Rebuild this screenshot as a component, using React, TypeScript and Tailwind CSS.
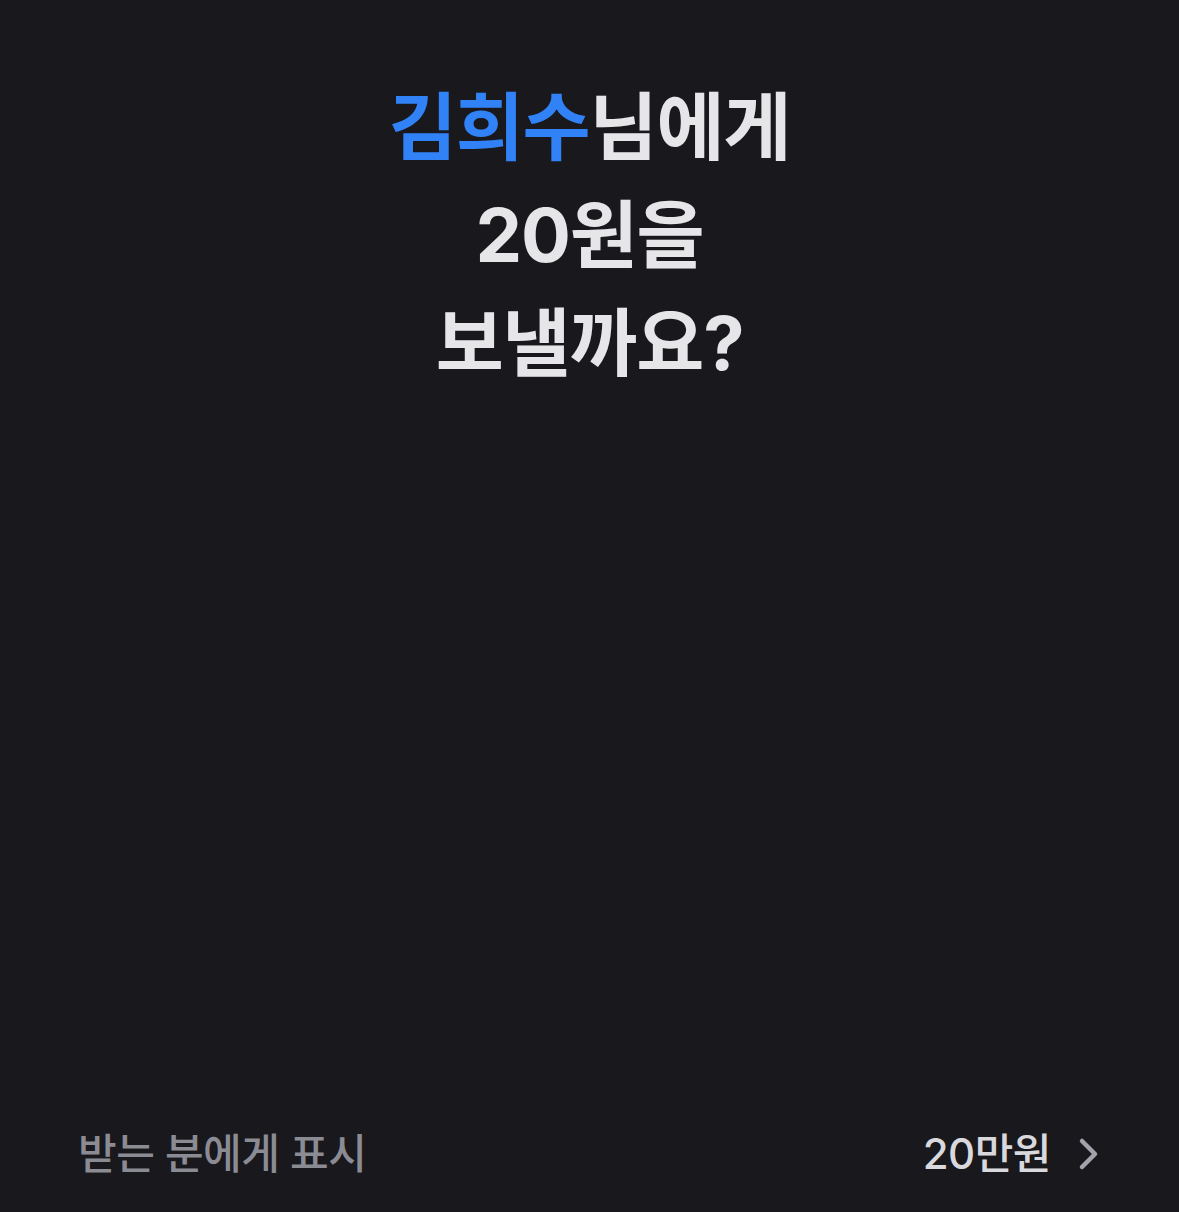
import React from 'react';

export default function App() {
  return (
    <div
      className="w-[1179px] h-[1212px] bg-[#18181d] flex flex-col justify-between overflow-hidden"
      style={{ fontFamily: 'Inter, "Noto Sans CJK KR", "Noto Sans", sans-serif' }}
    >
      <div className="pt-[73px] flex flex-col items-center text-[74px] leading-[108px] font-bold tracking-[-1.2px] text-[#e6e6e8]">
        <div>
          <span className="text-[#3182f6]">김희수</span>님에게
        </div>
        <div>20원을</div>
        <div>보낼까요?</div>
      </div>

      <div className="flex items-center justify-between pl-[78px] pr-[78px] pb-[27px]">
        <span className="text-[42px] font-medium tracking-[-0.5px] text-[#8b8b94]">받는 분에게 표시</span>
        <div className="flex items-center gap-[26px]">
          <span className="text-[42px] font-medium tracking-[-0.5px] text-[#d8d8dd]">20만원</span>
          <svg width="24" height="34" viewBox="0 0 24 34" fill="none">
            <path d="M5 4 L18 17 L5 30" stroke="#a3a3ab" strokeWidth="4.5" strokeLinecap="round" strokeLinejoin="round" />
          </svg>
        </div>
      </div>
    </div>
  );
}
